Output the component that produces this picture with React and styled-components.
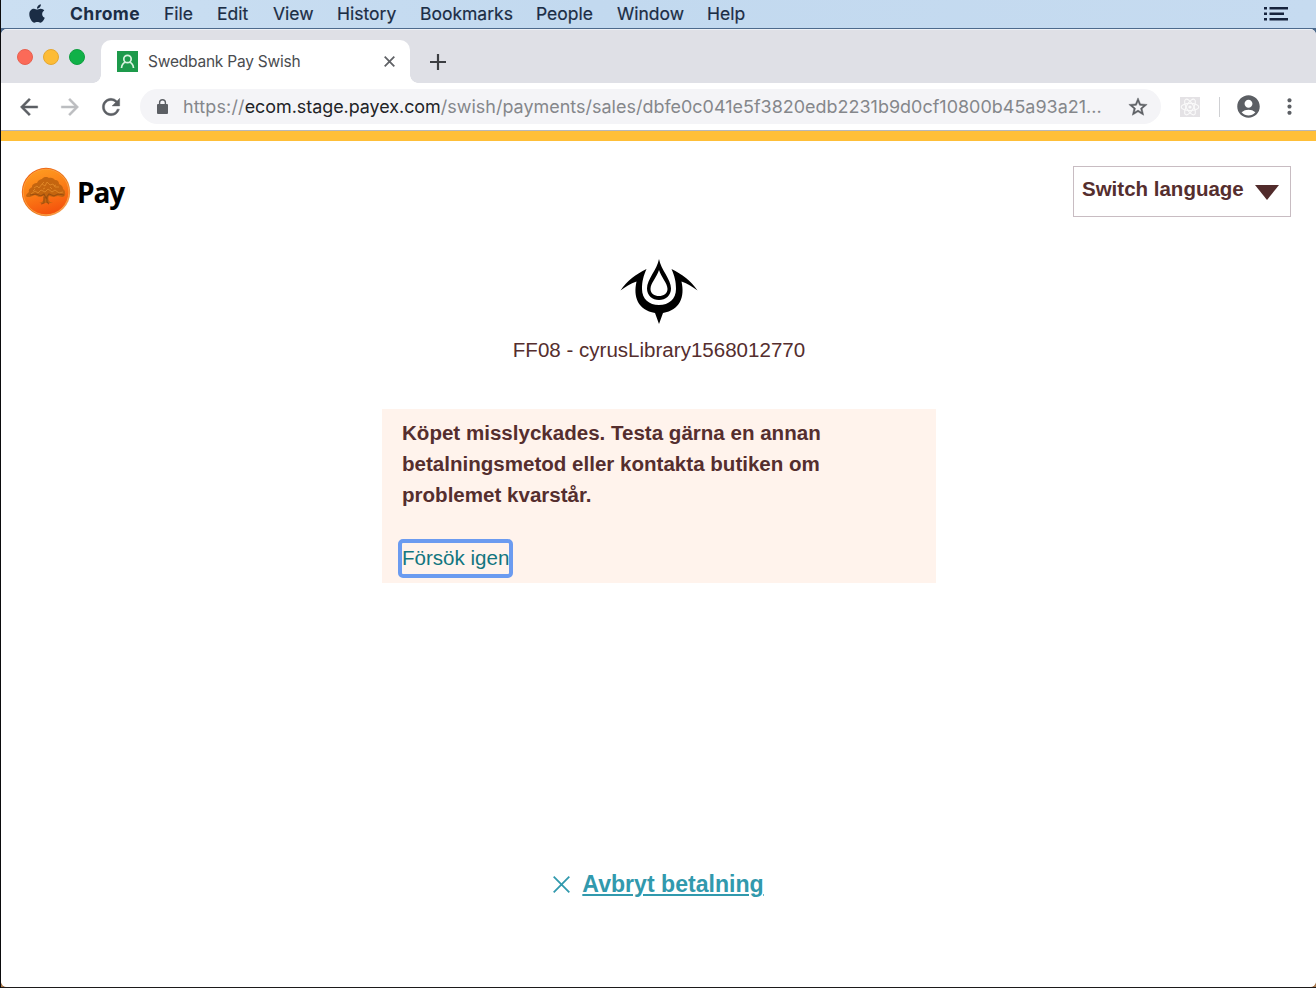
import React from "react";
import styled, { createGlobalStyle } from "styled-components";
import { FaApple } from "react-icons/fa";
import {
  MdArrowBack,
  MdArrowForward,
  MdRefresh,
  MdStarBorder,
  MdAccountCircle,
  MdMoreVert,
} from "react-icons/md";

const GlobalStyle = createGlobalStyle`
  * { box-sizing: border-box; }
  body { margin: 0; background: #fff; overflow: hidden; }
`;

const Desktop = styled.div`
  width: 1316px;
  height: 988px;
  display: flex;
  flex-direction: column;
  border-left: 1px solid #0b0b0d;
  border-bottom: 1px solid #1c1a1a;
  background: linear-gradient(#4d6a8c 0 60px, #a9794d 900px);
  font-family: "Liberation Sans", Arial, sans-serif;
`;

const MenuBar = styled.nav`
  height: 28px;
  flex: none;
  display: flex;
  align-items: center;
  padding: 0 28px 1px 26px;
  background: linear-gradient(90deg, #cbdff2, #c2d9ef 45%, #c6dbf0);
  color: #1b2d45;
  font-family: Inter, sans-serif;
  font-size: 17.5px;
`;

const AppleMark = styled(FaApple)`
  width: 20px;
  height: 21px;
  margin: 0 23px 1px 0;
`;

const MenuItem = styled.span`
  width: ${(p) => p.$width}px;
  white-space: nowrap;
  font-weight: ${(p) => (p.$strong ? 700 : 400)};
  letter-spacing: ${(p) => (p.$strong ? 0.4 : 0)}px;
  -webkit-text-stroke: ${(p) => (p.$strong ? 0 : 0.2)}px currentColor;
`;

const ListIcon = styled.svg`
  margin-left: auto;
  display: block;
`;

const Window = styled.main`
  flex: 1;
  display: flex;
  flex-direction: column;
  margin-top: 1px;
  border-radius: 6px;
  background: #fff;
  overflow: hidden;
`;

const TabStrip = styled.div`
  height: 54px;
  flex: none;
  display: flex;
  align-items: flex-end;
  background: #dfe0e6;
  border-top: 1px solid #eef1f6;
`;

const WindowButtons = styled.div`
  display: flex;
  gap: 10px;
  padding: 0 16px 18px 16px;
`;

const Dot = styled.span`
  width: 16px;
  height: 16px;
  border-radius: 50%;
  background: ${(p) => p.$fill};
  border: 1px solid ${(p) => p.$edge};
`;

const Tab = styled.div`
  position: relative;
  width: 309px;
  height: 43px;
  display: flex;
  align-items: center;
  padding: 0 15px 0 16px;
  border-radius: 10px 10px 0 0;
  background: #fff;
  &::before,
  &::after {
    content: "";
    position: absolute;
    bottom: 0;
    width: 8px;
    height: 8px;
  }
  &::before {
    left: -8px;
    background: radial-gradient(circle at 0 0, transparent 7.5px, #fff 8px);
  }
  &::after {
    right: -8px;
    background: radial-gradient(circle at 100% 0, transparent 7.5px, #fff 8px);
  }
`;

const TabTitle = styled.span`
  flex: 1;
  margin-left: 10px;
  color: #4a4c50;
  font-family: Inter, sans-serif;
  font-size: 15.5px;
  letter-spacing: -0.22px;
  white-space: nowrap;
`;

const NewTab = styled.svg`
  margin: 0 0 13px 20px;
`;

const Toolbar = styled.div`
  height: 48px;
  flex: none;
  display: flex;
  align-items: center;
  padding: 0 14px 0 16px;
  border-bottom: 1px solid #b7b7ba;
  color: #5c5f64;
`;

const ToolIcon = styled.span`
  display: flex;
  justify-content: center;
  flex: none;
  width: 24px;
  margin-left: ${(p) => p.$before || 0}px;
  margin-right: ${(p) => p.$gap}px;
  font-size: 24px;
  color: ${(p) => p.$tone || "#5c5f64"};
  svg {
    flex: none;
    stroke-width: ${(p) => p.$weight || 0};
  }
  path[fill="none"] {
    stroke: none;
  }
`;

const AddressBar = styled.div`
  width: 1021px;
  height: 35px;
  flex: none;
  display: flex;
  align-items: center;
  padding: 0 12px 0 17px;
  border-radius: 18px;
  background: #f4f4f7;
`;

const Url = styled.span`
  flex: 1;
  margin-left: 15px;
  color: #85878b;
  font-family: Inter, sans-serif;
  font-size: 17.95px;
  letter-spacing: 0.02px;
  white-space: nowrap;
`;

const Scheme = styled.span`
  letter-spacing: 0.15px;
`;

const Host = styled.span`
  color: #222326;
  letter-spacing: -0.04px;
`;

const Star = styled(MdStarBorder)`
  stroke: currentColor;
  stroke-width: 0.5;
  path[fill="none"] {
    stroke: none;
  }
`;

const Divider = styled.span`
  width: 1px;
  height: 20px;
  margin: 0 16px 0 17px;
  background: #cfd0d3;
`;

const Page = styled.section`
  flex: 1;
  display: flex;
  flex-direction: column;
  align-items: center;
  border-top: 10px solid #ffbf38;
  background: #fff;
  color: #552e2e;
`;

const Header = styled.header`
  width: 100%;
  display: flex;
  justify-content: space-between;
  padding: 25px 25px 0 20px;
`;

const Brand = styled.div`
  display: flex;
  align-items: center;
  gap: 6px;
  height: 51px;
  color: #000;
  font-family: "Open Sans", "Noto Sans", sans-serif;
  font-weight: 700;
  font-size: 28px;
`;

const BrandName = styled.span`
  letter-spacing: -1.1px;
`;

const LanguageSwitch = styled.button`
  width: 218px;
  height: 51px;
  display: flex;
  align-items: center;
  justify-content: space-between;
  padding: 0 11px 5px 8px;
  border: 1px solid #c8bcc2;
  background: #fff;
  color: #552e2e;
  font: bold 20.5px "Liberation Sans", Arial, sans-serif;
  white-space: nowrap;
`;

const Caret = styled.svg`
  margin-top: 7px;
`;

const MerchantLogo = styled.svg`
  margin-top: 42px;
`;

const MerchantName = styled.div`
  margin-top: 14px;
  padding-left: 1px;
  font-size: 20.55px;
  line-height: 24px;
`;

const ErrorBox = styled.div`
  width: 554px;
  height: 174px;
  margin: 47px 0 0 1px;
  padding: 8px 20px;
  background: #fff3ec;
  font-size: 20.55px;
  line-height: 31px;
`;

const ErrorText = styled.p`
  width: 450px;
  margin: 0 0 32px;
  font-weight: 700;
`;

const RetryLink = styled.a`
  display: inline-block;
  height: 31px;
  color: #127680;
  border-radius: 1px;
  outline: 4px solid #6b9bf0;
  line-height: 29px;
`;

const CancelRow = styled.div`
  display: flex;
  align-items: center;
  gap: 12px;
  margin-top: 287px;
  color: #3199ad;
`;

const CancelLink = styled.a`
  font-size: 23.1px;
  font-weight: 700;
  line-height: 28px;
  text-decoration: underline;
  text-decoration-thickness: 1.5px;
  text-underline-offset: 2px;
`;

const menu = [
  ["Chrome", 94, true],
  ["File", 53],
  ["Edit", 56],
  ["View", 64],
  ["History", 83],
  ["Bookmarks", 116],
  ["People", 81],
  ["Window", 90],
  ["Help", 50],
];

function Favicon() {
  return (
    <svg width="21" height="21" viewBox="0 0 21 21">
      <path fill="#1d9a4b" d="M0 0h21v21H0z" />
      <g fill="none" stroke="#d9f3e0" strokeWidth="1.7">
        <circle cx="10.5" cy="8" r="3.7" />
        <path d="M4.500 17c.3-3 2-5.300 4-5.800M16.500 17c-.3-3-2-5.300-4-5.800" />
      </g>
    </svg>
  );
}

function Padlock() {
  return (
    <svg width="11" height="15" viewBox="0 0 11 15">
      <rect y="5" width="11" height="10" rx="1" fill="currentColor" />
      <path d="M2.600 6V3.600a2.900 2.900 0 0 1 5.800 0V6" fill="none" stroke="currentColor" strokeWidth="1.400" />
    </svg>
  );
}

function OakCoin() {
  return (
    <svg width="50" height="50" viewBox="0 0 50 50">
      <defs>
        <linearGradient id="coin" x1="0.3" y1="0" x2="0.6" y2="1">
          <stop offset="0" stopColor="#ff9a20" />
          <stop offset="0.5" stopColor="#fb7c16" />
          <stop offset="1" stopColor="#f4500c" />
        </linearGradient>
        <linearGradient id="rim" x1="0" y1="0" x2="1" y2="1">
          <stop offset="0" stopColor="#f15a0a" />
          <stop offset="0.6" stopColor="#e87a20" />
          <stop offset="1" stopColor="#f8a860" />
        </linearGradient>
      </defs>
      <circle cx="25" cy="25" r="24.200" fill="url(#rim)" />
      <circle cx="25" cy="25" r="22.800" fill="url(#coin)" stroke="#ffab4a" strokeWidth="0.7" />
      <path
        fill="#c4650f"
        d="M5 29c0-2 2-3 3-4-1-3 2-4 3-5 0-3 3-4 5-4 1-3 4-4 5-4 2-3 6-2 7-1 3-1 5 1 6 2 3 0 4 2 4 4 3 1 4 3 4 5 2 1 2 3 2 4 1 2-1 4-3 4l-4-1-5 1-4-1c-1 2-1 4 1 6l3 1h-14l3-1c2-2 2-4 1-6l-4 1-4-2-5 2c-2 0-4 0-4-1z"
      />
      <path
        d="M13 21l3-2 2 2 3-4 3 2 2-4 3 3 3-1 2 3 4 0M10 27l4-3 3 2 3-3 4 2 3-3 4 3 3-2 4 3 4-1M21 17l2-2M33 19l2-1M12 24l2-2M29 20l2 2M22 22l2-1"
        fill="none"
        stroke="#e8922e"
        strokeWidth="1"
        opacity="0.7"
      />
      <path
        d="M9 28l6-1 5 2 3-2 2 4 3-4 5 2 4-2 6 1M23 30v6l-3 1M26 29v6l2 2"
        fill="none"
        stroke="#8a450e"
        strokeWidth="1.100"
        opacity="0.7"
      />
    </svg>
  );
}

function ReactBadge() {
  return (
    <svg width="20" height="20" viewBox="0 0 20 20">
      <path d="M0 0h20v20H0z" fill="#e4e2e5" />
      <circle cx="10" cy="10" r="1.600" fill="#fafafa" />
      <g fill="none" stroke="#fafafa" style={{ strokeWidth: 1.1 }}>
        <ellipse cx="10" cy="10" rx="8.800" ry="3.600" />
        <ellipse cx="10" cy="10" rx="8.800" ry="3.600" transform="rotate(60 10 10)" />
        <ellipse cx="10" cy="10" rx="8.800" ry="3.600" transform="rotate(120 10 10)" />
      </g>
    </svg>
  );
}

export default function App() {
  return (
    <Desktop>
      <GlobalStyle />
      <MenuBar>
        <AppleMark />
        {menu.map(([label, width, strong]) => (
          <MenuItem key={label} $width={width} $strong={strong}>
            {label}
          </MenuItem>
        ))}
        <ListIcon width="24" height="14" viewBox="0 0 24 14" fill="#16233c">
          <path d="M0 0h3v2.500H0zM0 5.500h3V8H0zM0 11h3v2.500H0zM5.500 0H24v2.500H5.500zM5.500 5.500H20V8H5.500zM5.500 11H24v2.500H5.500z" />
        </ListIcon>
      </MenuBar>
      <Window>
        <TabStrip>
          <WindowButtons>
            <Dot $fill="#fb6a58" $edge="#e8604f" />
            <Dot $fill="#fdbc36" $edge="#e5a730" />
            <Dot $fill="#10b148" $edge="#0f9f40" />
          </WindowButtons>
          <Tab>
            <Favicon />
            <TabTitle>Swedbank Pay Swish</TabTitle>
            <svg width="11" height="11" viewBox="0 0 11 11" stroke="#606266" strokeWidth="1.800">
              <path d="M.7.7l9.600 9.600M10.300.7L.7 10.300" />
            </svg>
          </Tab>
          <NewTab width="16" height="16" viewBox="0 0 16 16" stroke="#3c3e42" strokeWidth="2.200">
            <path d="M8 0v16M0 8h16" />
          </NewTab>
        </TabStrip>
        <Toolbar>
          <ToolIcon $gap={17} $weight={0.4}><MdArrowBack size={26} /></ToolIcon>
          <ToolIcon $gap={17} $weight={0.4} $tone="#bcbdc0"><MdArrowForward size={26} /></ToolIcon>
          <ToolIcon $gap={17} $weight={0.4}><MdRefresh size={26} /></ToolIcon>
          <AddressBar>
            <Padlock />
            <Url>
              <Scheme>https://</Scheme>
              <Host>ecom.stage.payex.com</Host>
              /swish/payments/sales/dbfe0c041e5f3820edb2231b9d0cf10800b45a93a21...
            </Url>
            <Star size={22} />
          </AddressBar>
          <ToolIcon $before={17} $gap={0}>
            <ReactBadge />
          </ToolIcon>
          <Divider />
          <ToolIcon $gap={17}><MdAccountCircle size={27} /></ToolIcon>
          <ToolIcon $gap={0}><MdMoreVert size={25} /></ToolIcon>
        </Toolbar>
        <Page>
          <Header>
            <Brand>
              <OakCoin />
              <BrandName>Pay</BrandName>
            </Brand>
            <LanguageSwitch>
              Switch language
              <Caret width="24" height="15" viewBox="0 0 24 15" fill="#512b2b">
                <path d="M0 0h24L12 15z" />
              </Caret>
            </LanguageSwitch>
          </Header>
          <MerchantLogo width="78" height="65" viewBox="0 0 78 65">
            <path d="M.5 31.500C7 22 16 15 26.500 10C23.500 17 22 22 22 30C22 40 29 46 39 46C49 46 56 40 56 30C56 22 54.500 17 51.500 10C62 15 71 22 77.500 31.500C73 28 67.500 24.500 61.500 22.500C65 38 60 51 43 54L39 65L35 54C18 51 13 38 16.500 22.500C10.500 24.500 5 28 .5 31.500Z" />
            <path
              fillRule="evenodd"
              d="M39 0C41 11 51 20 51 29.500C51 36.500 45.500 41 39 41C32.500 41 27 36.500 27 29.500C27 20 37 11 39 0ZM39 11C37 18 30.500 24 30.500 30C30.500 34.500 34.500 37 39 37C43.500 37 47.500 34.500 47.500 30C47.500 24 41 18 39 11Z"
            />
          </MerchantLogo>
          <MerchantName>FF08 - cyrusLibrary1568012770</MerchantName>
          <ErrorBox>
            <ErrorText>
              Köpet misslyckades. Testa gärna en annan betalningsmetod eller kontakta butiken om
              problemet kvarstår.
            </ErrorText>
            <RetryLink>Försök igen</RetryLink>
          </ErrorBox>
          <CancelRow>
            <svg width="17" height="17" viewBox="0 0 17 17" stroke="currentColor" strokeWidth="1.800">
              <path d="M.7.7l15.600 15.600M16.300.7L.7 16.300" />
            </svg>
            <CancelLink>Avbryt betalning</CancelLink>
          </CancelRow>
        </Page>
      </Window>
    </Desktop>
  );
}
